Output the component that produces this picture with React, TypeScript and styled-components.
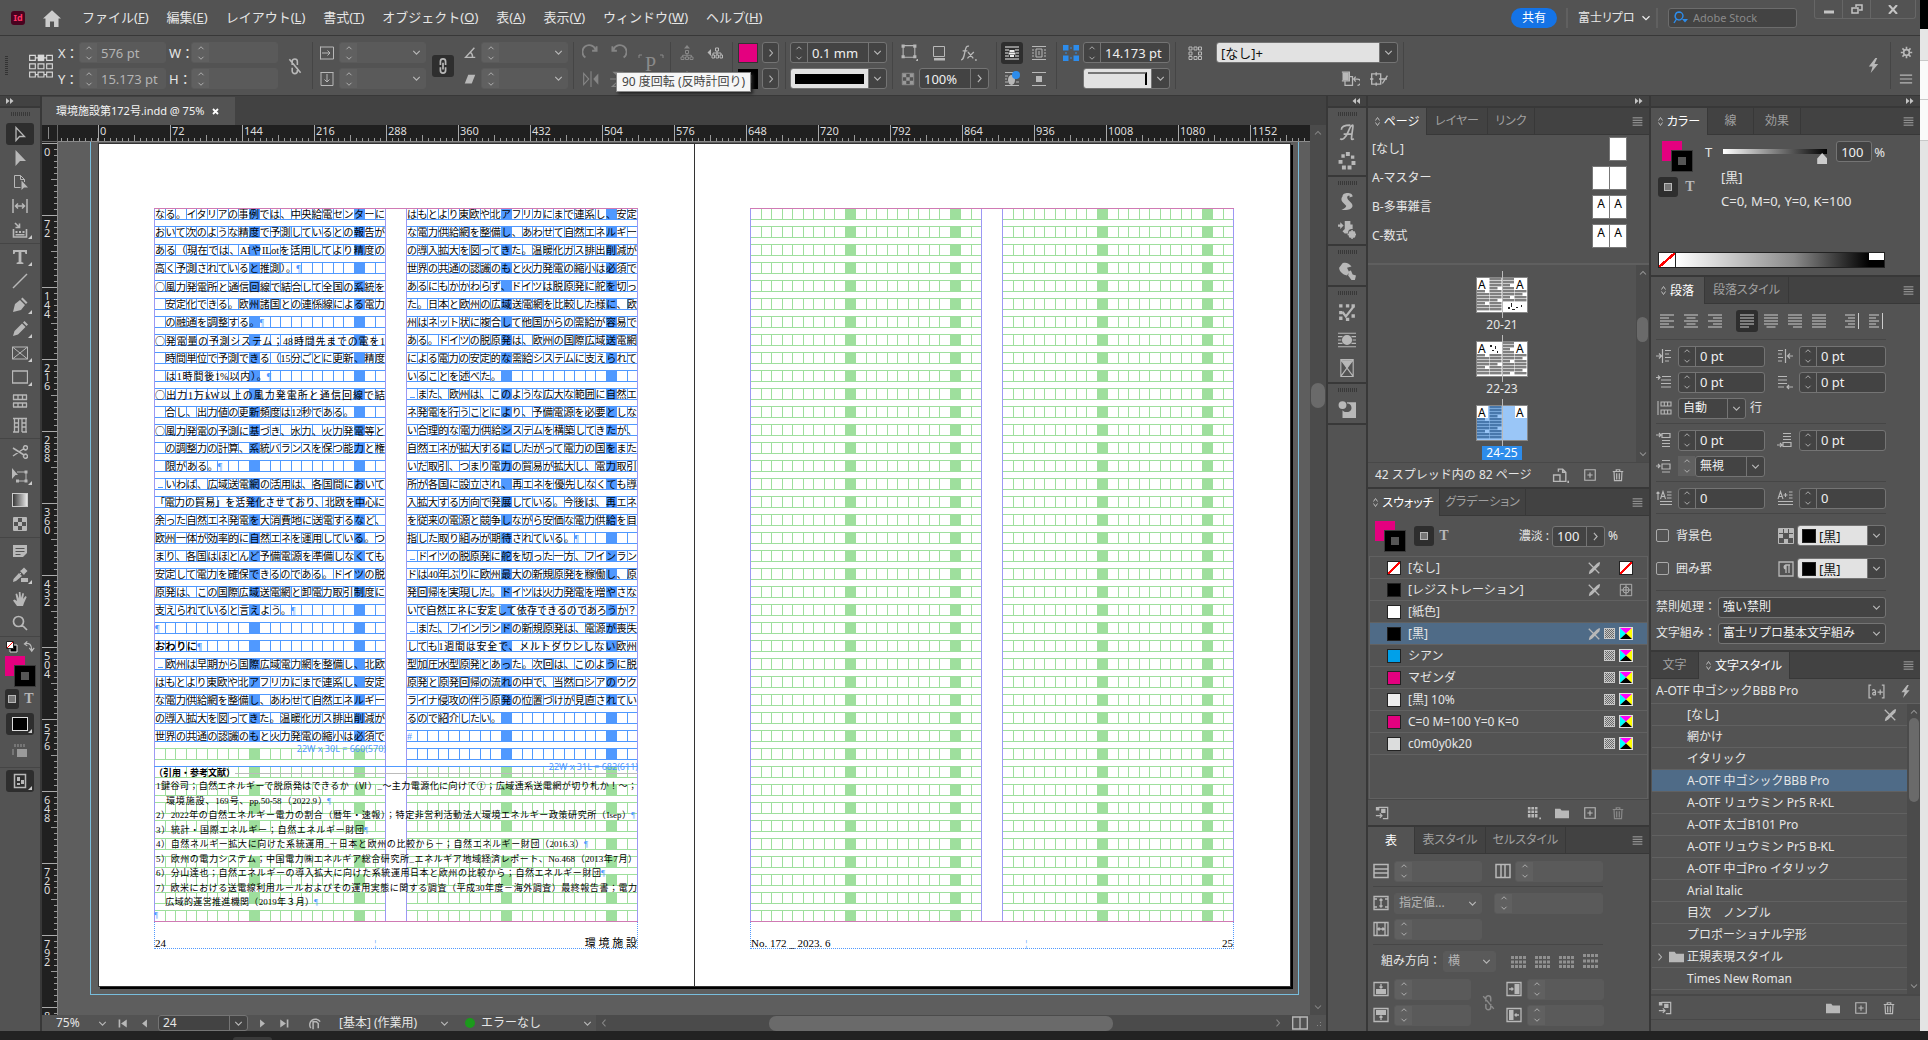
import React from "react";
import styled, { createGlobalStyle, css } from "styled-components";

const c = {
  bar: "#535353",
  dark: "#424242",
  line: "#383838",
  field: "#434343",
  ghost: "#5a5a5a",
  edge: "#747474",
  text: "#e6e6e6",
  dim: "#a0a0a0",
  icon: "#b8b8b8",
  pick: "#4f6b87",
  magenta: "#e4007f",
  grid: "#5099ff",
  green: "#9edf9d",
};
const ui = `"Noto Sans", "Noto Sans CJK JP", sans-serif`;
const mincho = `"Liberation Serif", "Noto Sans CJK JP", serif`;

const Global = createGlobalStyle`
  *, *::before, *::after { box-sizing: border-box; }
  body { margin: 0; background: #222; color: ${c.text}; font: 12px/16px ${ui}; overflow: hidden; }
  button, input, select { font: inherit; color: inherit; margin: 0; padding: 0; border: 0; background: none; min-width: 0; }
  button { display: flex; align-items: center; justify-content: center; flex: none; }
  select { appearance: none; }
  ul { list-style: none; margin: 0; padding: 0; }
  svg { display: block; flex: none; }
`;

/* ---------- icons: s = stroked path, f = filled path ---------- */
type Shape = { s?: string; f?: string; w?: number };
const shapes: Record<string, Shape> = {
  chevD: { s: "M4 6l4 4 4-4", w: 1.4 },
  chevU: { s: "M4 10l4-4 4 4", w: 1.4 },
  chevR: { s: "M6 3.5l4 4.5-4 4.5", w: 1.4 },
  chevL: { s: "M10 3.5L6 8l4 4.5", w: 1.4 },
  home: { f: "M8 1L0 8.5h2.2V16h4v-5h3.6v5h4V8.500H16z" },
  ref: { s: "M1 1.500h3.500v3H1zM11.500 1.500H15v3h-3.500zM1 6.700h3.500v3H1zM6.200 6.700h3.600v3H6.200zM11.500 6.700H15v3h-3.500zM1 11.800h3.500v3H1zM6.200 11.800h3.600v3H6.200zM11.500 11.800H15v3h-3.500zM4.500 3h2M9.500 3h2M4.500 13.300h2M9.500 13.300h2", f: "M6 1h4v4H6z", w: 0.7 },
  unlink: { s: "M5.500 7V4a2.300 2.300 0 014.600 0v3M5.500 9.500v3a2.300 2.300 0 004.600 0v-3M3 2l10 12", w: 1.4 },
  link: { s: "M5.700 7V4a2.300 2.300 0 014.600 0v3M5.700 9v3a2.300 2.300 0 004.600 0V9M8 5v6", w: 1.5 },
  scaleX: { s: "M1.500 1.500v13M1.500 2h13M1.500 14h13M3 8h8M8.500 5.500L11 8l-2.500 2.500M14.500 2v12" },
  scaleY: { s: "M1.500 1.500h13M2 1.500v13M14 1.500v13M8 3v8M5.500 8.500L8 11l2.500-2.500M2 14.500h12" },
  angle: { s: "M13 2L3 13h11M8 7c2 1 3 3 3 6", w: 1.6 },
  shear: { f: "M6 3h8l-4 10H2z" },
  rotR: { s: "M3 12a6 6 0 119-7M13 2v4H9", w: 1.6 },
  rotL: { s: "M13 12a6 6 0 10-9-7M3 2v4h4", w: 1.6 },
  flipH: { s: "M1.500 3v10l4.500-5zM8 1v14", f: "M14.500 3v10L10 8z" },
  flipV: { s: "M3 14.500h10L8 10zM1 8h14", f: "M3 1.500h10L8 6z" },
  tree: { s: "M6.500 5.500h3v3h-3zM2 12h3v2.500H2zM6.500 12h3v2.500h-3zM11 12h3v2.500h-3zM8 8.500V12M3.500 12v-1.700h9V12", f: "M8 0l3 3.500H5z" },
  treeL: { s: "M8.500 3h3v3h-3zM5 10h2.500v3H5zM9 10h2.500v3H9zM13 10h2.500v3H13zM10 6v4M6 10V8h8v2", f: "M4 4v7L0.500 7.500z" },
  corner: { s: "M3 1.500h9a1 1 0 011 1v9a1 1 0 01-1 1H3a1 1 0 01-1-1v-9a1 1 0 011-1", f: "M0.500 0.500h3v3h-3zM11.500 0.500h3v3h-3zM0.500 10.500h3v3h-3zM11.500 10.500h3v3h-3zM15 14h1v2h-2z" },
  shadow: { s: "M2.500 1.500h11v10h-11z", f: "M3 13h11v2.500H3z" },
  fx: { s: "M1 15c2 0 2.500-2 3.500-7S6 1.500 8.500 2M2.500 6.500H7M7.500 7.500l5 6M13 7.500l-6 6M15 14v2", w: 1.2 },
  checker: { s: "M1.500 1.500h13v13h-13z", f: "M2 2h4v4H2zM10 2h4v4h-4zM6 6h4v4H6zM2 10h4v4H2zM10 10h4v4h-4z" },
  wrapA: { s: "M1 2h14M1 5h4M11 5h4M1 8h3M12 8h3M1 11h4M11 11h4M1 14h14", f: "M5.500 5h5v2h-5zM4.500 7.500h7v2h-7zM6 10h4v2H6z" },
  wrapB: { s: "M1 1.500h14M1 5h2M13 5h2M1 8h2M13 8h2M1 11h2M13 11h2M1 14.500h14M5 4h6v8H5zM8 6v4" },
  wrapC: { s: "M1 1.500h14M1 14.500h14M1 5h3M1 8h2M1 11h3M12 11h3" },
  wrapD: { s: "M1 1.500h14M1 14.500h14", f: "M5 5h6v6H5z" },
  bluebox: { f: "M0 0h5.500v5.500H0zM10.500 0H16v5.500h-5.500zM0 10.500h5.500V16H0zM10.500 10.500H16V16h-5.500z", s: "M7 3h2M7 13h2M3 7v2M13 7v2" },
  marquee: { s: "M2 2h3v3H2zM7 2h3v3H7zM11.500 2h3v3h-3zM2 7h3v3H2zM11.500 7h3v3h-3zM2 11.500h3v3H2zM7 11.500h3v3H7zM11.500 11.500h3v3h-3z" },
  clear: { s: "M1.500 2.500h6v7h-6M7 6h3v7H4v-3M14 13a2.500 2.500 0 000-5h-3M12.500 6L11 8l1.500 2", f: "M2 3h5v6H2z" },
  cancel: { s: "M1.500 3.500h8v9h-8zM5.500 2v3M5.500 11v3M0 8h3M8 8h3M11 12l4.500-7M11 8h4", w: 1.2 },
  bolt: { f: "M10 0L3 9h4l-2 7 8-9.500H9L12 0z" },
  gear: { s: "M8 4.500a3.500 3.500 0 100 7 3.500 3.500 0 000-7M8 1v2.500M8 12.500V15M1 8h2.500M12.500 8H15M3 3l1.800 1.800M11.200 11.200L13 13M13 3l-1.800 1.800M4.800 11.200L3 13", w: 2 },
  menu: { s: "M1 3.500h14M1 8h14M1 12.500h14", w: 1.3 },
  lines: { s: "M2 3.500h12M2 6.500h12M2 9.500h12M2 12.500h12" },
  search: { s: "M6 2a4 4 0 014 4 4 4 0 01-6.500 3L1 13M6 2a4 4 0 00-2.500 7", f: "M9 9h6l-3 3.500z", w: 1.4 },
  arrow: { s: "M4 1.500v13l3.500-4h5z", w: 1.3 },
  arrowF: { f: "M3.500 0v16l4.500-5H14z" },
  page: { s: "M2.500 1.500h6l4 4V8M2.500 1.500v12h6M8.500 1.500v4h4", f: "M9.500 6.500V16l2.500-2.500h4z" },
  gap: { s: "M1 1v14M15 1v14M3.500 8h9M6 5.500L3.500 8 6 10.500M10 5.500L12.500 8 10 10.500", w: 1.5 },
  collect: { s: "M1.500 7v8h13V7M3 1l4 4M7.500 1.500V5.500H3.500", f: "M3.500 9h2v2h-2zM7 9h2v2H7zM10.500 9h2v2h-2zM3.500 12h9v1.500h-9z", w: 1.6 },
  type: { f: "M1 1h14v4h-1.500l-.8-2H9.400v10l2 .7V15H4.600v-1.300l2-.7V3H3.300l-.8 2H1z" },
  slash: { s: "M1 15L15 1", w: 1.5 },
  pen: { f: "M1 15l2-8 5-4 5 5-4 5zM9 2l1.500-1.500L15.500 5.500 14 7z" },
  pencil: { f: "M1 15l1.500-5L10 2.500 13.500 6 6 13.500zM11 1.500L12.500 0 16 3.500 14.500 5z" },
  frame: { s: "M.500 2h15v12H.500zM.500 2l15 12M15.500 2L.500 14" },
  rect: { s: "M.500 2h15v12H.500z", w: 1.3 },
  tblH: { s: "M1 2h14M1 6.500h14M1 10h14M1 14h14M1.500 2v5M14.500 2v5M6 2v5M10.500 2v5M1.500 10v4M6 10v4M10.500 10v4M14.500 10v4", w: 1.3 },
  tblV: { s: "M1 1.500h14M2.500 2v13M6.500 2v13M10 2v13M14 2v13M3 6h3M3 10h3M10 6h4M10 10h4M1 15h6M10 15h5", w: 1.3 },
  scissors: { s: "M1 4l11 7M1 12L12 4.500M12.500 5.500a2 2 0 102-3.500 2 2 0 00-2 3.500M12.500 10.500a2 2 0 102 3.500 2 2 0 00-2-3.500", w: 1.5 },
  xform: { s: "M5 4h9v9H5", f: "M0 0l6 7H3.500L0 11zM12.500 2.500h3v3h-3zM12.500 11.500h3v3h-3zM4 11.500h3v3H4z" },
  note: { f: "M1 2h14v8l-4 4H1zM3.500 5v1h9V5zM3.500 8v1h9V8zM3.500 11v1h5v-1z" },
  dropper: { s: "M2 13l7-7", f: "M1 15l.5-3L7 6l3 3-6 5zM8 4l1.500-1L12 .500 15.500 4 13 6.500 12 8zM9 11h7v4H9z" },
  hand: { f: "M5 15L1 9.500 2.500 8.500 5 10 3.500 3l1.500-.5 2 5L6.800 1h1.700L9 7l1.500-5 1.500.5L11 8l2.500-3 1.200 1L12 12l-1 3z" },
  zoom: { s: "M6.500 1.500a5 5 0 110 10 5 5 0 010-10M10 10l5 5", w: 1.7 },
  swap: { s: "M4 3c5-1 8 2 8 8M6.500 .500L3 3.500l3.500 2.500M9 8.500l3 4 3-4", w: 1.5 },
  tick: { s: "M3 1v3M6 1v3M9 1v3M12 1v3M1 6v6", f: "M5 6h10v8H5z" },
  view: { s: "M2.500 1.500h11v13h-11z", f: "M5 4h3v4H5zM9 7h3v4H9zM5 10h3v2H5z", w: 1.5 },
  script: { s: "M2 13c2 2 5-1 7-6s3-6 4-6-1 8-1 12c0 1 1 1 2 0M5 9h8M3 5c0-3 4-4 8-4", w: 1.5 },
  dots: { f: "M7 0h3.500v3.500H7zM11.500 3h3v3h-3zM12 8h3.500v3.500H12zM8.500 12h3.500v3.500H8.500zM3.500 12h3.500v3.500H3.500zM.500 7h3.500v3.500H.500zM3 2h3v3H3z" },
  snake: { f: "M4 3c0-4 9-4 9 0l-3 1 .5-1.500C8 2 7.500 4 9 6l3 3c3 4-2 7-9 6 3-1 5-3 4-4L4 8C2.500 6.500 3 4 4 3z" },
  import: { f: "M0 3h2V1l3 3-3 3V5H0zM6 0h5v3h2v4c-3 0-4 1-4 4H6L4 9l2-2z", s: "M12.500 9.500a2.500 2.500 0 100 5 2.500 2.500 0 000-5M12.500 8v8M8.500 12h8M10 9.500l5 5M15 9.500l-5 5", w: 1.3 },
  link2: { f: "M4 1c3-1 6 0 8 3L8 5l2 4-2 3C4 11 1 8 1 5zM10 8l1.500-.5L13 11l3 1-1 4h-3l-3-4z" },
  check: { f: "M1 1h3v3H1zM7 1h3v3H7zM12 1h3v3h-3zM1 7h3v3H1zM12 10h3v3h-3zM1 12h3v3H1zM7 13h3v3H7z", s: "M4 8l3 4 7-9", w: 2 },
  over: { s: "M0 2h16M0 5h4M12 5h4M0 8h3M13 8h3M0 11h4M12 11h4M0 14h16", f: "M8 3.500a4.500 4.500 0 100 9 4.500 4.500 0 000-9z" },
  glass: { s: "M2.500 .500h11v15h-11zM2.500 .500L13.500 15.500M13.500 .500L2.500 15.500", f: "M3 1h10L8 8z" },
  puzzle: { f: "M8 2h8v14H4V9c2 3 8 2 8-2 0-2-1-4-4-4zM4 1a3.500 3.500 0 100 7 3.500 3.500 0 000-7z" },
  nopen: { s: "M2 2l12 12M3 14l5-5", f: "M2 15l1-4 8-8 3-2 1 1-1 3-8 8z", w: 1.5 },
  target: { s: "M1.500 1.500h13v13h-13zM8 4.500a3.500 3.500 0 100 7 3.500 3.500 0 000-7M8 2v12M2 8h12" },
  plus: { s: "M2 2h12v12H2zM8 5v6M5 8h6", w: 1.3 },
  trash: { s: "M2 4h12M6 4V2h4v2M3.500 4.500l.5 10h8l.5-10M6.500 6v7M9.500 6v7", w: 1.4 },
  folder: { f: "M0 3h6l1.500 2H16v9H0z" },
  lib: { s: "M4 1.500h10.500v13H9M1 11h7M5.500 8.500L8 11l-2.500 2.500", f: "M1 1h4v4H1zM7 3h5v5H7z", w: 1.4 },
  tiles: { f: "M1 1h3v3H1zM5 1h3v3H5zM9 1h3v3H9zM1 5h3v3H1zM5 5h3v3H5zM9 5h3v3H9zM1 9h3v4H1zM5 9h3v4H5zM9 9h3v4H9zM14 13h2v2h-2z" },
  pages: { s: "M1.500 7.500h6v6h-6zM6 4.500V2h4l3 3v8.500H8M10 2v3h3", f: "M14.500 13h1.500v2h-1.500z", w: 1.3 },
  split: { s: "M.700 2h14.600v12H.700zM8 2v12", w: 1.3 },
  first: { f: "M2 3h2v10H2zM12 3v10L5 8z" },
  prev: { f: "M11 3v10L5 8z" },
  next: { f: "M5 3v10l6-5z" },
  last: { f: "M12 3h2v10h-2zM4 3v10l7-5z" },
  pre: { s: "M4 13A6 6 0 1114 6M6.500 14V6H10l2 2v5", w: 1.6 },
  indL: { s: "M6.500 1v14M9 2.500h6M9 6h4M9 9.500h6M9 13h4M0 8h5M3 5.500L5.500 8 3 10.500", w: 1.2 },
  indR: { s: "M8.500 1v14M1 2.500h5M1 6h4M1 9.500h5M1 13h4M10.500 8H16M13 5.500L10.500 8l2.500 2.500", w: 1.2 },
  indF: { s: "M0 3.500h4M2 1.500l2 2-2 2M6 2.500h9M5 6h10M5 9.500h10M5 13h10", w: 1.2 },
  indE: { s: "M1 2.500h9M1 6h9M1 9.500h9M1 13h6M10 13h6M12 11l-2 2 2 2", w: 1.2 },
  rows: { s: "M2 1v14M5 2h10v4H5zM5 10h10v4H5zM8.300 2v4M11.600 2v4M8.300 10v4M11.600 10v4", w: 1.1 },
  before: { s: "M0 3h5M3 1l2 2-2 2M6 1.500h8v4H6zM6 8.500h8M6 11.500h8M6 14.500h8", w: 1.2 },
  after: { s: "M0 13h5M3 11l2 2-2 2M6 10.500h8v4H6zM6 1.500h8M6 4.500h8M6 7.500h8", w: 1.2 },
  mid: { s: "M0 8h4M2 6l2 2-2 2M6 6h8v5H6zM6 2.500h8M6 14h8", w: 1.2 },
  drop: { s: "M2 2v8M.500 3.500L2 2l1.500 1.500M4.500 9L7 1.500 9.500 9M5.500 6.500h3M11 2h4.500M11 5h4.500M11 8h4.500M4 11.500h12M4 14.500h12", w: 1.1 },
  dropN: { s: "M1 9L3.500 1.500 6 9M2 6.500h3M6.500 5h4M8.500 3v4M12 2h3.500M12 5h3.500M12 8h3.500M1 11.500h15M1 14.500h15", w: 1.1 },
  cells: { s: "M1 1.500h14v13H1zM1 6h14M1 10h14", w: 1.5 },
  cols: { s: "M1 1.500h14v13H1zM6 1.500v13M10 1.500v13", w: 1.5 },
  rowH: { s: "M1 1.500h14v13H1zM8 4v8M6.500 5.500L8 4l1.500 1.500M6.500 10.500L8 12l1.500-1.500M1 4h3M12 4h3M1 12h3M12 12h3", w: 1.3 },
  colW: { s: "M1 1.500h14v13H1zM4 1.500v13M12 1.500v13M5 8h6M6.500 6.500L5 8l1.500 1.500M9.500 6.500L11 8 9.500 9.500", w: 1.3 },
  insT: { s: "M1 1.500h14v13H1zM8 3v4M6.500 5.500L8 7l1.500-1.500", f: "M3 8h10v5H3z", w: 1.3 },
  insB: { s: "M1 1.500h14v13H1zM8 13V9M6.500 10.500L8 9l1.500 1.500", f: "M3 3h10v5H3z", w: 1.3 },
  insL: { s: "M1 1.500h14v13H1zM3 8h4M5.500 6.500L7 8 5.500 9.500", f: "M8.500 3h5v10h-5z", w: 1.3 },
  insR: { s: "M1 1.500h14v13H1zM13 8H9M10.500 6.500L9 8l1.500 1.500", f: "M3 3h4.500v10H3z", w: 1.3 },
  mini: { f: "M1 3h3v3H1zM5 3h3v3H5zM9 3h3v3H9zM13 3h3v3h-3zM1 7.500h3v3H1zM5 7.500h3v3H5zM9 7.500h3v3H9zM13 7.500h3v3h-3zM1 12h3v3H1zM5 12h3v3H5zM9 12h3v3H9zM13 12h3v3h-3z" },
  mini2: { f: "M1 1h3v3H1zM5 1h3v3H5zM9 1h3v3H9zM13 1h3v3h-3zM1 6.500h3v3H1zM5 6.500h3v3H5zM9 6.500h3v3H9zM13 6.500h3v3h-3zM1 12h3v3H1zM5 12h3v3H5zM9 12h3v3H9zM13 12h3v3h-3z" },
  shade: { f: "M1 1h4v4H1zM6 1h4v4H6zM11 1h4v4h-4zM1 6h4v4H1zM6 11h4v4H6zM11 6h4v4h-4z", s: "M.500 .500h15v15H.500z" },
  pilcrow: { s: "M1 1h14v14H1zM8 4v8M11 4v8M12 4H7.500", f: "M8 3.500a2.500 2.500 0 100 5z", w: 1.3 },
  aplus: { s: "M3 2H1v12h2M13 2h2v12h-2M4 7c1-1 3-1 3 1v3c-3 1-4-2 0-2.500M9 8.500h5M11.500 6v5", w: 1.2 },
};
const alignIcon = (k: number) => {
  const out: string[] = [];
  for (let i = 0; i < 5; i++) {
    const y = 2 + i * 3;
    const isShort = k < 3 ? i % 2 === 1 : k < 6 ? i === 4 : k > 6 ? i % 2 === 1 : false;
    const full = k > 6 ? 10 : 14;
    const len = isShort ? (k > 6 ? 7 : 9) : full;
    const mode = k % 3;
    const x = k === 6 || k === 8 ? 1 : k === 7 ? 1 + full - len : mode === 0 ? 1 : mode === 1 ? 1 + (full - len) / 2 : 1 + full - len;
    out.push(`M${x} ${y}h${len}`);
  }
  if (k > 6) out.push("M14.500 0v16");
  return out.join("");
};
function Glyph({ n, size = 16, color = c.icon, d }: { n?: string; size?: number; color?: string; d?: string }) {
  const g: Shape = d ? { s: d } : shapes[n || "rect"];
  return (
    <svg width={size} height={size} viewBox="0 0 16 16" aria-hidden="true">
      {g.f && <path d={g.f} fill={color} />}
      {g.s && <path d={g.s} fill="none" stroke={color} strokeWidth={g.w || 1} />}
    </svg>
  );
}

/* ---------- shell ---------- */
const Shell = styled.div`display: flex; flex-direction: column; height: 100vh;`;
const Upper = styled.div`flex: 1; display: flex; min-height: 0;`;
const AppWindow = styled.main`flex: 1; min-width: 0; display: flex; flex-direction: column; background: ${c.line};`;
const Behind = styled.div`
  width: 8px; background: linear-gradient(#000 0 29px, #e6e6e6 29px 60px, #c8c8c8 60px 61px, #fafafa 61px 99px, #c8c8c8 99px 100px, #fafafa 100px 140px, #c8c8c8 140px 141px, #e4e4e4 141px);
`;
const Taskbar = styled.div`height: 9px; background: #222; padding: 6px 0 0 233px;`;
const TaskTab = styled.div`width: 39px; height: 3px; background: #3a3a3a; border-radius: 3px 3px 0 0;`;

const MenuBar = styled.header`
  height: 36px; flex: none; background: ${c.bar}; border-bottom: 1px solid ${c.line};
  display: flex; align-items: center; padding-left: 11px; font-size: 13px;
`;
const Logo = styled.div`
  width: 14px; height: 14px; border-radius: 3px; background: #49021f; color: #ff3366; font-weight: 700; font-size: 9px; line-height: 13px; text-align: center; margin-right: 18px;
`;
const MenuNav = styled.nav`display: flex; gap: 18px; margin-left: 21px; margin-top: -2px; flex: 1;`;
const Share = styled.button`width: 46px; height: 20px; border-radius: 10px; background: #1473e6; color: #fff; font-size: 12px;`;
const BarRule = styled.i`width: 2px; height: 20px; background: #606060; margin: 0 10px 0 9px;`;
const Account = styled.button`font-size: 12px; gap: 4px; height: 20px; width: 71px; justify-content: flex-start; font-feature-settings: "palt"; white-space: nowrap;`;
const Search = styled.label`
  width: 129px; height: 20px; border: 1px solid #6c6c6c; border-radius: 3px; background: ${c.field}; display: flex; align-items: center; gap: 4px; padding-left: 4px; margin-right: 17px;
  input { flex: 1; font-size: 11px; &::placeholder { color: #8a8a8a; opacity: 1; } }
`;
const WinKeys = styled.div`
  align-self: flex-start; display: flex; height: 19px; border: 1px solid #666; border-top: 0; border-radius: 0 0 3px 3px; margin-right: 4px;
  button { width: 28px; border-right: 1px solid #666; }
  button:last-child { width: 44px; border: 0; }
`;

/* ---------- form parts ---------- */
const Box = styled.div<{ $ghost?: boolean; $w?: number }>`
  height: 21px; display: flex; border-radius: 3px; overflow: hidden; border: 1px solid ${(p) => (p.$ghost ? c.ghost : c.edge)};
  background: ${(p) => (p.$ghost ? c.ghost : c.field)}; ${(p) => (p.$w ? `width: ${p.$w}px; flex: none;` : "")}
  color: ${(p) => (p.$ghost ? "#b4b4b4" : "#f0f0f0")}; font-size: 13px;
  input, select { flex: 1; width: 100%; padding-left: 4px; }
  select { font-size: 12px; }
`;
const Spin = styled.button<{ $ghost?: boolean }>`
  width: 17px; flex-direction: column; ${(p) => (p.$ghost ? "background: #606060;" : `border-right: 1px solid ${c.edge};`)}
`;
const Drop = styled.button<{ $ghost?: boolean }>`width: 18px; ${(p) => (p.$ghost ? "" : `border-left: 1px solid ${c.edge};`)}`;
const Paper = styled.span`flex: 1; background: #e2e2e2; color: #111; display: flex; align-items: center; padding: 3px 4px; gap: 3px; white-space: nowrap;`;
const Stroke = styled.i`flex: 1; height: 10px; background: #000;`;
const Corner = styled.i`flex: 1; align-self: stretch; border-top: 2px solid #777; border-right: 2px solid #000;`;

function Field({ label, value = "", ghost, spin, drop, side, w }: { label: string; value?: string; ghost?: boolean; spin?: boolean; drop?: boolean; side?: boolean; w?: number }) {
  return (
    <Box $ghost={ghost} $w={w}>
      {spin && <Spin $ghost={ghost} aria-label={label + " step"}><Glyph n="chevU" size={10} /><Glyph n="chevD" size={10} /></Spin>}
      <input aria-label={label} defaultValue={value} />
      {(drop || side) && <Drop $ghost={ghost} aria-label={label + " list"}><Glyph n={side ? "chevR" : "chevD"} size={13} /></Drop>}
    </Box>
  );
}
function Pick({ label, value, ghost, line = true, w }: { label: string; value: string; ghost?: boolean; line?: boolean; w?: number }) {
  return (
    <Box $ghost={ghost} $w={w}>
      <select aria-label={label}><option>{value}</option></select>
      <Drop $ghost={ghost || !line} aria-label={label + " list"}><Glyph n="chevD" size={13} /></Drop>
    </Box>
  );
}

/* ---------- control bar ---------- */
const Control = styled.section`
  height: 60px; flex: none; background: ${c.bar}; border-bottom: 1px solid ${c.line}; display: flex; align-items: center; position: relative; z-index: 2;
`;
const Grip = styled.i<{ $v?: boolean }>`
  ${(p) => p.$v
    ? css`width: 3px; height: 19px; background: repeating-linear-gradient(#333 0 1px, transparent 1px 2px); margin: 0 20px 0 5px;`
    : css`width: 19px; height: 4px; background: repeating-linear-gradient(90deg, #383838 0 1px, transparent 1px 2px); flex: none; margin: 4px auto 3px;`}
`;
const Pair = styled.div<{ $cols: string; $gap?: number; $ml?: number }>`
  display: grid; grid-template-columns: ${(p) => p.$cols}; grid-auto-rows: 21px; gap: 5px ${(p) => p.$gap ?? 3}px; margin-left: ${(p) => p.$ml ?? 0}px;
  align-items: center; font-size: 13px;
`;
const Rule = styled.i<{ $ml?: number }>`width: 1px; height: 47px; background: #454545; margin-left: ${(p) => p.$ml ?? 5}px;`;
const Press = styled.button<{ $on?: boolean; $ml?: number; $w?: number; $faint?: boolean }>`
  width: ${(p) => p.$w ?? 22}px; height: 22px; border-radius: 3px; margin-left: ${(p) => p.$ml ?? 0}px;
  ${(p) => p.$on && "background: #2e2e2e;"} ${(p) => p.$faint && "opacity: .5;"}
`;
const Chip = styled.i<{ $c: string; $hole?: boolean }>`
  width: 20px; height: 20px; background: ${(p) => p.$c}; border: ${(p) => (p.$hole ? "6px solid #000" : "1px solid #333")};
`;
const MoreBtn = styled.button`width: 17px; height: 21px; border: 1px solid ${c.edge}; border-radius: 3px; background: ${c.field};`;
const Line = styled.div<{ $gap?: number; $end?: boolean }>`display: flex; align-items: center; gap: ${(p) => p.$gap ?? 4}px; ${(p) => p.$end && "justify-content: flex-end;"}`;
const Fill = styled.i`flex: 1;`;
const Anchor = styled.div`position: relative; margin-left: 11px;`;
const Tip = styled.div`
  position: absolute; left: -22px; top: 19px; white-space: nowrap; background: #f6f6f6; color: #444; border: 1px solid #888; box-shadow: 2px 2px 3px #222; padding: 0 5px; line-height: 18px; font-size: 12px;
`;

function ControlBar() {
  return (
    <Control>
      <Grip $v />
      <Glyph n="ref" size={26} color="#d8d8d8" />
      <Pair $cols="18px 87px 19px 87px" $ml={4}>
        <span>X：</span><Field label="X" value="576 pt" ghost spin /><span>W：</span><Field label="W" ghost spin />
        <span>Y：</span><Field label="Y" value="15.173 pt" ghost spin /><span>H：</span><Field label="H" ghost spin />
      </Pair>
      <Press $ml={6} aria-label="縦横比を固定"><Glyph n="unlink" size={18} /></Press>
      <Rule $ml={6} />
      <Pair $cols="16px 87px" $gap={4} $ml={6}>
        <Glyph n="scaleX" /><Field label="拡大/縮小 X" ghost spin drop />
        <Glyph n="scaleY" /><Field label="拡大/縮小 Y" ghost spin drop />
      </Pair>
      <Press $on $ml={6} aria-label="リンク"><Glyph n="link" size={18} /></Press>
      <Pair $cols="14px 87px" $gap={4} $ml={9}>
        <Glyph n="angle" size={14} /><Field label="回転角度" ghost spin drop />
        <Glyph n="shear" size={14} /><Field label="せん断" ghost spin drop />
      </Pair>
      <Rule />
      <Pair $cols="18px 18px" $gap={9} $ml={8}>
        <Press $w={18} $faint aria-label="右回転"><Glyph n="rotR" size={18} /></Press>
        <Press $w={18} $faint aria-label="左回転"><Glyph n="rotL" size={18} /></Press>
        <Press $w={18} $faint aria-label="水平反転"><Glyph n="flipH" size={18} /></Press>
        <Press $w={18} $faint aria-label="垂直反転"><Glyph n="flipV" size={18} /></Press>
      </Pair>
      <Anchor>
        <svg width="26" height="26" viewBox="0 0 26 26">
          <path d="M1 5V2h3M22 2h3v3" fill="none" stroke="#8a8a8a" />
          <text x="7" y="18" fontFamily="Liberation Serif" fontSize="20" fill="#8a8a8a">P</text>
        </svg>
        <Tip role="tooltip">90 度回転 (反時計回り)</Tip>
      </Anchor>
      <Rule $ml={6} />
      <Pair $cols="18px 18px" $gap={10} $ml={8}>
        <Glyph n="tree" color="#888" /><Glyph n="treeL" /><Glyph n="tree" color="#888" /><i />
      </Pair>
      <Rule $ml={7} />
      <Pair $cols="20px 17px" $gap={4} $ml={5}>
        <Chip $c={c.magenta} /><MoreBtn aria-label="塗り"><Glyph n="chevR" size={12} /></MoreBtn>
        <Chip $c="#555" $hole /><MoreBtn aria-label="線"><Glyph n="chevR" size={12} /></MoreBtn>
      </Pair>
      <Rule $ml={6} />
      <Pair $cols="97px" $ml={4}>
        <Field label="線幅" value="0.1 mm" spin drop />
        <Box><Paper><Stroke /></Paper><Drop aria-label="線種"><Glyph n="chevD" size={13} /></Drop></Box>
      </Pair>
      <Rule />
      <Pair $cols="88px" $ml={8}>
        <Line $gap={13}><Glyph n="corner" size={17} /><Glyph n="shadow" /><Glyph n="fx" size={17} /></Line>
        <Line $gap={4}><Glyph n="checker" size={14} color="#999" /><Field label="不透明度" value="100%" side w={70} /></Line>
      </Pair>
      <Rule $ml={7} />
      <Pair $cols="22px 22px" $gap={5} $ml={4}>
        <Press $on aria-label="回り込みなし"><Glyph n="wrapA" color="#eee" /></Press><Press aria-label="境界線ボックス"><Glyph n="wrapB" /></Press>
        <Press aria-label="オブジェクトのシェイプ">
          <svg width="16" height="16" viewBox="0 0 16 16"><path d={shapes.wrapC.s} stroke={c.icon} fill="none" /><ellipse cx="7.500" cy="9" rx="3.500" ry="5" fill={c.icon} /><circle cx="12" cy="4" r="4" fill="#2d8ceb" /></svg>
        </Press>
        <Press aria-label="ジャンプ"><Glyph n="wrapD" /></Press>
      </Pair>
      <Rule $ml={6} />
      <Pair $cols="17px 87px" $ml={6}>
        <Glyph n="bluebox" color="#2d8ceb" /><Field label="オフセット" value="14.173 pt" spin />
        <i /><Box><Paper><Corner /></Paper><Drop aria-label="コーナー"><Glyph n="chevD" size={13} /></Drop></Box>
      </Pair>
      <Rule />
      <Pair $cols="18px 182px" $gap={11} $ml={11}>
        <Glyph n="marquee" />
        <Box><Paper>[なし]+</Paper><Drop aria-label="オブジェクトスタイル"><Glyph n="chevD" size={13} /></Drop></Box>
        <i /><Line $gap={10} $end><Glyph n="clear" size={20} /><Glyph n="cancel" size={18} /><i /></Line>
      </Pair>
      <Rule />
      <Fill />
      <Press aria-label="クイック適用"><Glyph n="bolt" size={15} /></Press>
      <Rule $ml={6} />
      <Pair $cols="22px" $ml={4}>
        <Press aria-label="設定"><Glyph n="gear" size={13} /></Press><Press aria-label="メニュー"><Glyph n="menu" size={14} /></Press>
      </Pair>
      <i style={{ width: 3 }} />
    </Control>
  );
}

/* ---------- tool box ---------- */
const Work = styled.div`flex: 1; min-height: 0; display: flex; gap: 2px;`;
const Dock = styled.aside<{ $w: number }>`width: ${(p) => p.$w}px; flex: none; display: flex; flex-direction: column; gap: 2px; overflow: hidden;`;
const DockHead = styled.div<{ $left?: boolean }>`
  height: 10px; flex: none; background: ${c.dark}; padding: 0 6px; display: flex; align-items: center; justify-content: ${(p) => (p.$left ? "flex-start" : "flex-end")};
`;
const Chevs = ({ back }: { back?: boolean }) => (
  <svg width="8" height="6" viewBox="0 0 8 6"><path d={back ? "M4 0v6L.500 3zM8 0v6L4.500 3z" : "M0 0v6l3.500-3zM4 0v6l3.500-3z"} fill="#c4c4c4" /></svg>
);
const ToolCol = styled.div`flex: 1; background: ${c.bar}; display: flex; flex-direction: column; align-items: center;`;
const Tool = styled.button<{ $on?: boolean }>`
  position: relative; width: 28px; height: 22px; margin: 1px 0; border-radius: 3px; ${(p) => p.$on && "background: #2e2e2e;"}
`;
const More = styled.i`position: absolute; right: 2px; bottom: 2px; border: 2px solid; border-color: transparent #ccc #ccc transparent;`;
const ToolRule = styled.i`width: 100%; height: 1px; margin: 1px 0; background: #454545; flex: none;`;
const Pile = styled.div`position: relative; width: 30px; height: 30px; flex: none;`;
const PileChip = styled.i<{ $top?: boolean }>`
  position: absolute; width: 20px; height: 20px; ${(p) => (p.$top ? "right: 0; bottom: 0; border: 6px solid #000; background: #555; outline: 1px solid #3a3a3a;" : `left: 0; top: 0; background: ${c.magenta};`)}
`;
const SwatchPile = () => <Pile><PileChip /><PileChip $top /></Pile>;
const Target = styled.button<{ $on?: boolean; $w?: number }>`
  width: ${(p) => p.$w ?? 20}px; height: 20px; border-radius: 3px; color: ${c.icon}; font: 700 14px/16px "Liberation Serif", serif; ${(p) => p.$on && "background: #2e2e2e;"}
`;
const Square = styled.i`width: 8px; height: 8px; border: 1px solid ${c.icon}; background: #777;`;
const ToolRow = styled.div<{ $h: number }>`height: ${(p) => p.$h}px; display: flex; align-items: center; justify-content: center; gap: 4px; flex: none;`;
const BlackChip = styled.i`width: 16px; height: 14px; background: #000; border: 1px solid #ddd;`;

const toolGroups: [string, number][][] = [
  [["arrow", 0], ["arrowF", 0], ["page", 0], ["gap", 0], ["collect", 1]],
  [["type", 1], ["slash", 0], ["pen", 1], ["pencil", 1], ["frame", 1], ["rect", 1], ["tblH", 0], ["tblV", 0]],
  [["scissors", 0], ["xform", 1], ["gradient", 0], ["checker", 0]],
  [["note", 0], ["dropper", 1], ["hand", 0], ["zoom", 0]],
];
function ToolBox() {
  return (
    <Dock $w={40}>
      <DockHead $left><Chevs /></DockHead>
      <ToolCol>
        <Grip />
        <i style={{ height: 3 }} />
        {toolGroups.map((g, i) => (
          <React.Fragment key={i}>
            {g.map(([n, more]) => (
              <Tool key={n} $on={n === "arrow"} aria-label={n}>
                {n === "gradient" ? (
                  <svg width="16" height="16"><defs><linearGradient id="tg"><stop stopColor="#333" /><stop offset="1" stopColor="#eee" /></linearGradient></defs><rect x=".500" y="1.500" width="15" height="13" fill="url(#tg)" stroke="#ccc" /></svg>
                ) : <Glyph n={n} />}
                {more ? <More /> : null}
              </Tool>
            ))}
            <ToolRule />
          </React.Fragment>
        ))}
        <ToolRow $h={18}>
          <svg width="12" height="12"><path d="M4 4h7v7H4z" fill="#000" stroke="#ddd" /><path d="M.500.500h7v7h-7z" fill="#fff" stroke="#222" /><path d="M1 7l6-6" stroke="red" /></svg>
          <Glyph n="swap" size={13} />
        </ToolRow>
        <SwatchPile />
        <ToolRow $h={26}><Target $on $w={14} aria-label="オブジェクト"><Square /></Target><Target $w={12} aria-label="テキスト">T</Target></ToolRow>
        <Tool $on aria-label="カラーを適用"><BlackChip /><More /></Tool>
        <ToolRow $h={30}><Glyph n="tick" color="#9a9a9a" /></ToolRow>
        <ToolRule />
        <Tool $on aria-label="表示モード"><Glyph n="view" /><More /></Tool>
      </ToolCol>
    </Dock>
  );
}

/* ---------- document ---------- */
const Doc = styled.section`flex: 1; min-width: 0; display: grid; grid-template: 29px 17px minmax(0, 1fr) 16px / 16px minmax(0, 1fr) 16px; background: ${c.line};`;
const DocTabs = styled.div`grid-column: 1 / -1; background: ${c.dark}; display: flex;`;
const DocTab = styled.button`background: ${c.bar}; height: 28px; padding: 0 16px 0 14px; font-size: 11px; gap: 8px; color: #f4f4f4; margin-top: 1px;`;
const RulerCorner = styled.div`background: #202020 linear-gradient(#888, #888) 6px 2px / 1px 12px no-repeat; border: 0 solid #666; border-width: 0 1px 1px 0;`;
const HRuler = styled.div`background: #202020; border-bottom: 1px solid #8a8a8a; display: flex; overflow: hidden;`;
const HLead = styled.i`width: 40px; flex: none; background: repeating-linear-gradient(90deg, transparent 0 3px, #999 3px 4px, transparent 4px 6px) 0 100% / 100% 3px no-repeat;`;
const HSeg = styled.span`
  width: 72px; flex: none; border-left: 1px solid #aaa; padding-left: 1px; font-size: 11px; line-height: 12px; color: #ddd;
  background: repeating-linear-gradient(90deg, transparent 0 5px, #999 5px 6px) 0 100% / 72px 3px repeat-x, linear-gradient(#999, #999) 35px 100% / 1px 6px no-repeat;
`;
const VRuler = styled.div`background: #202020; border-right: 1px solid #8a8a8a; overflow: hidden; padding-top: 1px;`;
const VSeg = styled.div`
  height: 72px; border-top: 1px solid #aaa; padding: 3px 0 0 2px; font-size: 11px; line-height: 9px; color: #ddd;
  background: repeating-linear-gradient(transparent 0 5px, #999 5px 6px) 100% 0 / 3px 72px no-repeat, linear-gradient(#999, #999) 100% 35px / 6px 1px no-repeat;
  span { display: block; width: 7px; overflow-wrap: anywhere; }
`;
const Canvas = styled.div`background: #5e5e5e; overflow: hidden; padding-left: 32px;`;
const Bleed = styled.div`width: max-content; border: solid #78bddc; border-width: 0 1px 1px; padding: 2px 8px 8px;`;
const Spread = styled.div`display: flex; box-shadow: 0 0 0 1px #333, 2px 2px 0 1px #000;`;
const Sheet = styled.article<{ $right?: boolean }>`
  width: ${(p) => (p.$right ? 596 : 595)}px; height: 842px; background: #fff; color: #000; font: 10px/13px ${mincho};
  padding: 64px 56px 0 55px; ${(p) => p.$right && "border-left: 1px solid #333;"}
`;
const Frame = styled.div`
  position: relative; display: grid; grid-template-columns: 1fr 1fr; gap: 20px; background: #fff;
  &::after { content: ""; position: absolute; inset: 0; border: solid #d07ab4; border-width: 1px 0; pointer-events: none; }
`;
const Col = styled.div`display: flex; flex-direction: column; gap: 6px; border: solid #9c98f4; border-width: 0 1px;`;
const Row = styled.div<{ $c: string }>`
  position: relative; height: 12px; border: solid ${(p) => p.$c}; border-width: 1px 0; display: flex;
  & > i { flex: 1; border-right: 1px solid ${(p) => p.$c}; }
  & > i:nth-child(22) { border: 0; }
  & > i:nth-child(10), & > i:nth-child(20) { background: ${(p) => p.$c}; }
`;
const RowText = styled.div<{ $bold?: boolean }>`position: absolute; inset: -1px 0; display: flex; white-space: nowrap; ${(p) => p.$bold && "font-weight: 700;"}`;
const Justified = styled.span`text-align: justify; text-align-last: justify; flex: none;`;
const Mark = styled.span`color: ${c.grid};`;
const Blank = styled.span`background: linear-gradient(${c.grid}, ${c.grid}) 3px 80% / 5px 1px no-repeat;`;
const Bullet = styled.span`font-family: "Noto Sans CJK JP", sans-serif;`;

type L = [string, number?, string?];
const left: L[] = [
  ["なる。イタリアの事例では、中央給電センターに"], ["おいて次のような精度で予測しているとの報告が"], ["ある（現在では、AIやILotを活用してより精度の"], ["高く予測されていると推測）。", 13.5, "¶"],
  ["○風力発電所と通信回線で結合して全国の系統を"], ["　安定化できる。欧州諸国との連係線による電力"], ["　の融通を調整する。", 10, "¶"],
  ["○発電量の予測システム；48時間先までの電を1"], ["　時間単位で予測できる（15分ごとに更新、精度"], ["　は1時間後1%以内）。", 10.7, "¶"],
  ["○出力1万kW以上の風力発電所と通信回線で結"], ["　合し、出力値の更新頻度は12秒である。", 19], ["○風力発電の予測に基づき、水力、火力発電等と"], ["　の調整力の計算、系統バランスを保つ能力と権"], ["　限がある。", 6, "¶"],
  ["_いわば、広域送電網の活用は、各国間において"], ["「電力の貿易」を活発化させており、北欧を中心に"], ["余った自然エネ発電を大消費地に送電するなど、"], ["欧州一体が効率的に自然エネを運用している。つ"],
  ["まり、各国はほとんど予備電源を準備しなくても"], ["安定して電力を確保できるのである。ドイツの脱"], ["原発は、この国際広域送電網と卸電力取引制度に"], ["支えられていると言えよう。", 13, "¶"], ["", 0, "¶"], ["おわりに", 4, "¶"],
  ["_欧州は早期から国際広域電力網を整備し、北欧"], ["はもとより東欧や北アフリカにまで連系し、安定"], ["な電力供給網を整備し、あわせて自然エネルギー"], ["の導入拡大を図ってきた。温暖化ガス排出削減が"], ["世界の共通の認識のもと火力発電の縮小は必須で"],
];
const right: L[] = [
  ...left.slice(26), ["あるにもかかわらず、ドイツは脱原発に舵を切っ"], ["た。日本と欧州の広域送電網を比較した様に、欧"], ["州はネット状に複合して他国からの需給が容易で"], ["ある。ドイツの脱原発は、欧州の国際広域送電網"],
  ["による電力の安定的な需給システムに支えられて"], ["いることを述べた。", 9], ["_また、欧州は、このような広大な範囲に自然エ"], ["ネ発電を行うことにより、予備電源を必要としな"], ["い合理的な電力供給システムを構築してきたが、"],
  ["自然エネが拡大するにしたがって電力の国をまた"], ["いだ取引、つまり電力の貿易が拡大し、電力取引"], ["所が各国に設立され、再エネを優先しなくても導"], ["入拡大する方向で発展している。今後は、再エネ"], ["を従来の電源と競争しながら安価な電力供給を目"],
  ["指した取り組みが期待されている。", 16, "¶"], ["_ドイツの脱原発に舵を切った一方、フインラン"], ["ドは40年ぶりに欧州最大の新規原発を稼働し、原"], ["発回帰を実現した。ドイツは火力発電を増やさな"], ["いで自然エネに安定して依存できるのであろうか？"],
  ["_また、フインランドの新規原発は、電源が喪失"], ["しても1週間は安全で、メルトダウンしない欧州"], ["型加圧水型原発とあった。次回は、このように脱"], ["原発と原発回帰の流れの中で、当然ロシアのウク"], ["ライナ侵攻の伴う原発の位置づけが見直されてい"], ["るので紹介したい。", 9],
  ["", 0, "#"], [""],
];
const cells = Array.from({ length: 22 }, (_, i) => <i key={i} />);
function lineText(t: string) {
  if (t[0] === "_") return <><Blank>　</Blank>{t.slice(1)}</>;
  if (t[0] === "○") return <><Bullet>○</Bullet>{t.slice(1)}</>;
  return t;
}
function TextColumn({ lines = [] as L[] }) {
  return (
    <Col>
      {Array.from({ length: 40 }, (_, i) => {
        const l = lines[i];
        return (
          <Row key={i} $c={l ? c.grid : c.green}>
            {cells}
            {l && (
              <RowText $bold={l[0] === "おわりに"}>
                <Justified style={{ width: `${((l[1] ?? 22) / 22) * 100}%` }}>{lineText(l[0])}</Justified>
                {l[2] && <Mark>{l[2]}</Mark>}
              </RowText>
            )}
          </Row>
        );
      })}
    </Col>
  );
}
const Count = styled.div<{ $second?: boolean }>`
  position: absolute; top: ${(p) => (p.$second ? 552 : 534)}px; right: ${(p) => (p.$second ? 0 : 252)}px; color: ${c.grid}; font: 9px/14px ${ui};
`;
const Refs = styled.section`position: absolute; left: 0; right: 0; top: 558px; border-top: 1px solid ${c.grid}; font-size: 9px; white-space: nowrap;`;
const RefHead = styled.div`display: flex; align-items: center; height: 12px; font-weight: 700; &::after { content: ""; flex: 1; border-top: 1px solid #bbb; }`;
const RefList = styled.ul`
  height: 130px; display: flex; flex-direction: column; justify-content: space-between; padding-left: 2px;
  li { display: flex; line-height: 14px; }
`;
const refs: [string, number, boolean?][] = [
  ["1鍵谷司；自然エネルギーで脱原発はできるか（Ⅵ）_～主力電源化に向けて①；広域連系送電網が切り札か！～；", 481],
  ["　環境施設、169号、pp.50-58（2022.9）", 171, true],
  ["2）2022年の自然エネルギー電力の割合（暦年・速報）；特定非営利活動法人環境エネルギー政策研究所（Isep）", 475, true],
  ["3）統計・国際エネルギー；自然エネルギー財団", 208, true],
  ["4）自然ネルギー拡大に向けた系統運用_－日本と欧州の比較から－；自然エネルギー財団（2016.3）", 428, true],
  ["5）欧州の電力システム；中国電力㈱エネルギア総合研究所_エネルギア地域経済レポート、No.468（2013年7月）", 481],
  ["6）分山達也；自然エネルギーの導入拡大に向けた系統運用日本と欧州の比較から；自然エネルギー財団", 445, true],
  ["7）欧米における送電線利用ルールおよびその運用実態に関する調査（平成30年度－海外調査）最終報告書；電力", 481],
  ["　広域的運営推進機関（2019年３月）", 158, true],
];
const Folio = styled.footer`
  height: 27px; border: 1px dotted ${c.grid}; border-top: 0; display: flex; justify-content: space-between; align-items: flex-end; font-size: 11px; line-height: 10px; white-space: pre;
`;
const VScroll = styled.div`grid-row: 2 / 4; grid-column: 3; background: #4b4b4b; display: flex; flex-direction: column; align-items: center; justify-content: space-between; padding: 2px 0;`;
const HScroll = styled.div`flex: 1; align-self: stretch; background: #4b4b4b; display: flex; align-items: center; justify-content: space-between; margin-left: 2px; padding: 0 8px 0 2px;`;
const Thumb = styled.i<{ $w?: number; $h?: number; $below?: number }>`
  width: ${(p) => p.$w ?? 14}px; height: ${(p) => p.$h ?? 14}px; border-radius: 7px; background: #6a6a6a; margin-bottom: ${(p) => p.$below ?? 0}px;
`;
const Status = styled.footer`grid-column: 1 / -1; background: ${c.bar}; display: flex; align-items: center; padding-left: 14px; font-size: 12px;`;
const StatusCell = styled.span<{ $w: number }>`width: ${(p) => p.$w}px; flex: none; display: flex; align-items: center; justify-content: space-between; line-height: 16px;`;
const StatusBox = styled.span`width: 90px; height: 16px; border: 1px solid ${c.edge}; border-radius: 3px; background: ${c.field}; display: flex; overflow: hidden; input { flex: 1; width: 60px; padding-left: 4px; height: 14px; font-size: 12px; }`;
const Ok = styled.i`width: 10px; height: 10px; border-radius: 5px; background: #1b9a1b; margin: 0 6px 0 14px;`;
const Resize = styled.i`width: 10px; height: 10px; margin: 0 3px; background: radial-gradient(#888 1px, transparent 1px) 0 0 / 3px 3px; clip-path: polygon(100% 0, 100% 100%, 0 100%);`;

function Document() {
  return (
    <Doc>
      <DocTabs><DocTab>環境施設第172号.indd @ 75% <svg width="7" height="7" viewBox="0 0 7 7"><path d="M1 1l5 5M6 1L1 6" stroke="#fff" strokeWidth="1.800" /></svg></DocTab></DocTabs>
      <RulerCorner />
      <HRuler><HLead />{Array.from({ length: 17 }, (_, i) => <HSeg key={i}>{i * 72}</HSeg>)}</HRuler>
      <VScroll><Glyph n="chevU" size={12} color="#888" /><Thumb $h={25} $below={350} /><Glyph n="chevD" size={12} color="#888" /></VScroll>
      <VRuler>{Array.from({ length: 13 }, (_, i) => <VSeg key={i}><span>{i * 72}</span></VSeg>)}</VRuler>
      <Canvas>
        <Bleed>
          <Spread>
            <Sheet>
              <Frame>
                <TextColumn lines={left} /><TextColumn lines={right} />
                <Count>22W x 30L = 660(570)</Count>
                <Refs>
                  <RefHead>（引用・参考文献）</RefHead>
                  <RefList>{refs.map(([t, w, m]) => <li key={t}><Justified style={{ width: w }}>{t}</Justified>{m && <Mark>¶</Mark>}</li>)}</RefList>
                  <Mark>¶</Mark>
                </Refs>
                <Count $second>22W x 31L = 682(611)</Count>
              </Frame>
              <Folio><span>24</span><Mark>¦</Mark><span>環 境 施 設</span></Folio>
            </Sheet>
            <Sheet $right>
              <Frame><TextColumn /><TextColumn /></Frame>
              <Folio><span>No. 172 _ 2023. 6</span><Mark>¦</Mark><span>25</span></Folio>
            </Sheet>
          </Spread>
        </Bleed>
      </Canvas>
      <Status>
        <StatusCell $w={53}>75%<Glyph n="chevD" size={13} /></StatusCell>
        <StatusCell $w={42}><i /><Glyph n="first" size={13} /><Glyph n="prev" size={13} /></StatusCell>
        <i style={{ width: 7 }} />
        <StatusBox><input aria-label="ページ" defaultValue="24" /><Drop aria-label="ページ一覧"><Glyph n="chevD" size={13} /></Drop></StatusBox>
        <StatusCell $w={42}><i /><Glyph n="next" size={13} /><Glyph n="last" size={13} /></StatusCell>
        <StatusCell $w={49}><i /><Glyph n="pre" size={15} /><i /></StatusCell>
        <StatusCell $w={112}>[基本] (作業用)<Glyph n="chevD" size={13} /></StatusCell>
        <Ok />
        <StatusCell $w={113}>エラーなし<Glyph n="chevD" size={13} /></StatusCell>
        <HScroll><Glyph n="chevL" size={12} color="#888" /><Thumb $w={344} $h={15} /><Glyph n="chevR" size={12} color="#888" /></HScroll>
        <Glyph n="split" size={16} />
        <i style={{ width: 2 }} />
        <Resize />
      </Status>
    </Doc>
  );
}

/* ---------- panels ---------- */
const Panel = styled.section<{ $grow?: boolean }>`background: ${c.bar}; display: flex; flex-direction: column; ${(p) => (p.$grow ? "flex: 1; min-height: 0;" : "flex: none;")}`;
const Tabs = styled.div`height: 27px; flex: none; background: ${c.dark}; display: flex; align-items: stretch; border-bottom: 1px solid ${c.line};`;
const Tab = styled.button<{ $on?: boolean; $w: number }>`
  width: ${(p) => p.$w}px; border-right: 1px solid ${c.line}; color: ${(p) => (p.$on ? "#fff" : c.dim)}; gap: 4px; white-space: nowrap; font-size: 12px; font-feature-settings: "palt";
  ${(p) => p.$on && `background: ${c.bar}; height: 27px;`}
`;
const TabMenu = styled.button`margin-left: auto; width: 23px;`;
const Arrows = () => <svg width="5" height="9" viewBox="0 0 5 9"><path d="M.500 3.500l2-3 2 3M.500 5.500l2 3 2-3" fill="none" stroke="#bbb" /></svg>;
function TabRow({ items, on, mark = true }: { items: [string, number][]; on: number; mark?: boolean }) {
  return (
    <Tabs>
      {items.map(([t, w], i) => <Tab key={t} $w={w} $on={i === on}>{i === on && mark && <Arrows />}{t}</Tab>)}
      <TabMenu aria-label="パネルメニュー"><Glyph n="lines" size={13} /></TabMenu>
    </Tabs>
  );
}
const Foot = styled.div<{ $h: number; $pr: number }>`height: ${(p) => p.$h}px; flex: none; display: flex; align-items: center; gap: 14px; padding: 0 ${(p) => p.$pr}px 0 7px; border-top: 1px solid #484848;`;

/* icon dock */
const IconGroup = styled.div<{ $last?: boolean }>`background: ${c.bar}; display: flex; flex-direction: column; align-items: center; ${(p) => p.$last && "flex: 1;"}`;
const DockIcon = styled.button`height: 28px; width: 30px;`;
function IconDock() {
  return (
    <Dock $w={38}>
      <DockHead><Chevs back /></DockHead>
      {[["script", "dots"], ["snake", "import"], ["link2"], ["check", "over", "glass"], ["puzzle"]].map((g) => (
        <IconGroup key={g[0]}><Grip />{g.map((n) => <DockIcon key={n} aria-label={n}><Glyph n={n} size={18} /></DockIcon>)}</IconGroup>
      ))}
      <IconGroup $last />
    </Dock>
  );
}

/* pages */
const Masters = styled.ul`height: 130px; padding: 0 22px 0 4px; border-bottom: 2px solid #5f5f5f; li { height: 28px; margin-bottom: 1px; display: flex; align-items: center; justify-content: space-between; font-size: 12px; }`;
const MasterThumb = styled.span`display: flex; background: #fff; border: 1px solid #777; height: 24px;`;
const Leaf = styled.i`width: 16px; color: #000; font: 12px/16px ${ui}; text-align: center; & + & { border-left: 1px solid #777; width: 17px; }`;
const PageArea = styled.div`height: 197px; display: flex; overflow: hidden;`;
const PageList = styled.div`flex: 1; display: flex; flex-direction: column; align-items: center; padding-top: 6px;`;
const PageItem = styled.button`flex-direction: column; height: 64px; justify-content: flex-start;`;
const PageName = styled.span<{ $on?: boolean }>`font-size: 12px; line-height: 14px; padding: 0 4px; ${(p) => p.$on && "background: #2d8ceb; color: #fff;"}`;
const Track = styled.div`width: 13px; background: #4b4b4b; display: flex; flex-direction: column; align-items: center; justify-content: space-between; padding: 2px 0;`;
const ThumbArt = ({ k }: { k: number }) => {
  const on = k === 2;
  const ink = on ? "#4878ac" : "#808080";
  const bars: React.ReactNode[] = [];
  for (let q = 0; q < 4; q++) {
    if (on && q > 1) continue;
    for (let r = 0; r < 11; r++) {
      const y = 7 + r * 3;
      if ((q === 0 || q === 3) && r < 4) continue;
      if (k === 0 && q > 1 && r > 7) continue;
      if (k === 1 && q === 1 && r < 4) continue;
      bars.push(<rect key={q + "-" + r} x={1 + q * 12.5} y={y} width={(r * 5 + q) % 4 === 0 ? 8 : 12} height="2.400" fill={ink} />);
    }
  }
  return (
    <svg width="52" height="47" viewBox="0 0 52 47">
      <rect x=".500" y="6.500" width="51" height="35" fill={on ? "#9ac6f7" : "#fff"} stroke="#888" />
      {on && <path d="M1 7h11v12H1zM39 7h12v12H39z" fill="#fff" />}
      {bars}
      {k === 0 && <path d="M32 36h2v2h-2zM35 32h1v4h-1zM40 36h2v1h-2zM45 34h1v2h-1zM36 38h3v1h-3z" fill="#222" />}
      {k === 1 && <path d="M14 10h2v2h-2zM19 11h1v3h-1zM16 15h2v1h-2zM21 16h1v2h-1z" fill="#222" />}
      <path d="M26.500 0v47" stroke="#bbb" />
      <text x="2" y="18" fontSize="12" fill="#000" fontFamily="Noto Sans">A</text>
      <text x="40" y="18" fontSize="12" fill="#000" fontFamily="Noto Sans">A</text>
    </svg>
  );
};
function PagesPanel() {
  return (
    <Panel>
      <TabRow items={[["ページ", 59], ["レイヤー", 61], ["リンク", 47]]} on={0} />
      <Masters>
        {["[なし]", "A-マスター", "B-多事雑言", "C-数式"].map((t, i) => (
          <li key={t}>{t}<MasterThumb><Leaf>{i > 1 && "A"}</Leaf>{i > 0 && <Leaf>{i > 1 && "A"}</Leaf>}</MasterThumb></li>
        ))}
      </Masters>
      <PageArea>
        <PageList>
          {["20-21", "22-23", "24-25"].map((t, k) => <PageItem key={t}><ThumbArt k={k} /><PageName $on={k === 2}>{t}</PageName></PageItem>)}
        </PageList>
        <Track><Glyph n="chevU" size={12} color="#999" /><Thumb $w={11} $h={25} $below={68} /><Glyph n="chevD" size={12} color="#999" /></Track>
      </PageArea>
      <Foot $h={25} $pr={24}><span style={{ flex: 1 }}>42 スプレッド内の 82 ページ</span><Glyph n="pages" size={17} /><Glyph n="plus" size={14} /><Glyph n="trash" size={14} /></Foot>
    </Panel>
  );
}

/* swatches */
const SwatchHead = styled.div`height: 40px; display: flex; align-items: center; padding: 0 31px 0 7px; gap: 3px; font-size: 12px;`;
const SwatchList = styled.ul`height: 243px; border: 1px solid #616161; margin: 0 1px;`;
const SwatchRow = styled.li<{ $on?: boolean }>`
  height: 22px; display: flex; align-items: center; gap: 2px; border-bottom: 1px solid #616161; padding: 0 14px 0 17px; font-size: 12px; ${(p) => p.$on && `background: ${c.pick};`}
  & > span { flex: 1; padding-left: 5px; }
`;
const Color = styled.i<{ $c: string }>`width: 14px; height: 14px; border: 1px solid #222; background: ${(p) => p.$c}; flex: none;`;
const none = "linear-gradient(to top left, #fff 44%, red 44% 56%, #fff 56%)";
const Kind = ({ k }: { k: string }) =>
  k === "cmyk" ? (
    <svg width="14" height="13" viewBox="0 0 14 13"><path fill="#ddd" d="M0 0h14v13H0z" /><path fill="#0ff" d="M1 1v11l6-5.500z" /><path fill="#f0f" d="M1 1h12L7 6.500z" /><path fill="#ff0" d="M13 1v11L7 6.500z" /><path fill="#000" d="M1 12h12L7 6.500z" /></svg>
  ) : k === "tint" ? (
    <svg width="14" height="13" viewBox="0 0 14 13"><path fill="#c8c8c8" d="M1 1h11v11H1z" /><path stroke="#6a6a6a" strokeDasharray="1 1" d="M2 2.500h9M3 3.500h8M2 4.500h9M3 5.500h8M2 6.500h9M3 7.500h8M2 8.500h9M3 9.500h8M2 10.500h9" /></svg>
  ) : k === "none" ? <Color $c={none} /> : k === "" ? <i style={{ width: 14 }} /> : <Glyph n={k} size={14} />;
const swatches: [string, string, string[]][] = [
  ["[なし]", none, ["nopen", "", "none"]], ["[レジストレーション]", "#000", ["nopen", "", "target"]], ["[紙色]", "#fff", []], ["[黒]", "#000", ["nopen", "tint", "cmyk"]],
  ["シアン", "#00a0e9", ["tint", "cmyk"]], ["マゼンダ", c.magenta, ["tint", "cmyk"]], ["[黒] 10%", "#efefef", ["tint", "cmyk"]], ["C=0 M=100 Y=0 K=0", c.magenta, ["tint", "cmyk"]], ["c0m0y0k20", "#dcdddd", ["tint", "cmyk"]],
];
function SwatchPanel() {
  return (
    <Panel>
      <TabRow items={[["スウォッチ", 72], ["グラデーション", 86]]} on={0} />
      <SwatchHead>
        <SwatchPile />
        <i style={{ width: 3 }} /><Target $on aria-label="オブジェクト"><Square /></Target><Target $w={14} aria-label="テキスト">T</Target>
        <Fill /><span>濃淡 :</span><Field label="濃淡" value="100" side w={53} /><span>%</span>
      </SwatchHead>
      <SwatchList>
        {swatches.map(([t, col, k]) => <SwatchRow key={t} $on={t === "[黒]"}><Color $c={col} /><span>{t}</span>{k.map((x, i) => <Kind key={i} k={x} />)}</SwatchRow>)}
      </SwatchList>
      <Foot $h={26} $pr={24}><Glyph n="lib" size={14} /><Fill /><Glyph n="tiles" size={14} /><Glyph n="folder" size={14} /><Glyph n="plus" size={14} /><Glyph n="trash" size={14} color="#888" /></Foot>
    </Panel>
  );
}

/* table + paragraph rows */
const Rows = styled.div<{ $pad: string }>`padding: ${(p) => p.$pad};`;
const FormRow = styled.div<{ $cols: string; $h?: number }>`display: grid; grid-template-columns: ${(p) => p.$cols}; align-items: center; height: ${(p) => p.$h ?? 26}px; font-size: 12px;`;
const Hair = styled.i`display: block; height: 1px; background: #464646; margin: 2px 0 3px;`;
function TablePanel() {
  return (
    <Panel $grow>
      <TabRow items={[["表", 47], ["表スタイル", 71], ["セルスタイル", 80]]} on={0} mark={false} />
      <Rows $pad="4px 46px 0 5px">
        <FormRow $cols="21px 88px 13px 20px 88px"><Glyph n="cells" /><Field label="行数" ghost spin /><i /><Glyph n="cols" /><Field label="列数" ghost spin /></FormRow>
        <Hair />
        <FormRow $cols="21px 88px 12px 109px"><Glyph n="rowH" /><Pick label="行の高さ" value="指定値..." ghost /><i /><Field label="高さ" ghost spin /></FormRow>
        <FormRow $cols="21px 88px"><Glyph n="colW" /><Field label="列の幅" ghost spin /></FormRow>
        <Hair />
        <FormRow $cols="8px 62px 53px 14px 24px 24px 24px 21px"><i /><span>組み方向：</span><Pick label="組み方向" value="横" ghost /><i /><Glyph n="mini" color="#909090" /><Glyph n="mini" color="#909090" /><Glyph n="mini" color="#909090" /><Glyph n="mini2" color="#909090" /></FormRow>
        <i style={{ display: "block", height: 2 }} />
        <Line $gap={9}>
          <div>
            <FormRow $cols="21px 77px"><Glyph n="insT" /><Field label="上" ghost spin /></FormRow>
            <FormRow $cols="21px 77px"><Glyph n="insB" /><Field label="下" ghost spin /></FormRow>
          </div>
          <Glyph n="unlink" size={17} color="#8a8a8a" />
          <div>
            <FormRow $cols="21px 77px"><Glyph n="insL" /><Field label="左" ghost spin /></FormRow>
            <FormRow $cols="21px 77px"><Glyph n="insR" /><Field label="右" ghost spin /></FormRow>
          </div>
        </Line>
      </Rows>
    </Panel>
  );
}

/* color */
const ColorBody = styled.div`height: 140px; padding: 6px 35px 7px 7px; display: flex; flex-direction: column; justify-content: space-between;`;
const ColorTop = styled.div`display: grid; grid-template-columns: 47px minmax(0, 1fr); font-size: 13px;`;
const Indent = styled.div<{ $p: number }>`padding-left: ${(p) => p.$p}px; line-height: 24px;`;
const Tint = styled.input`
  appearance: none; flex: 1; width: 60px; height: 20px;
  &::-webkit-slider-runnable-track { height: 5px; background: linear-gradient(90deg, #fff, #000); }
  &::-webkit-slider-thumb { appearance: none; width: 10px; height: 11px; margin: 4px -5px 0 0; background: #ccc; clip-path: polygon(50% 0, 100% 50%, 100% 100%, 0 100%, 0 50%); }
`;
const Spectrum = styled.div`height: 16px; border: 1px solid #222; display: flex; background: linear-gradient(90deg, #fff 17px, #8a8a8a 60%, #000 210px);`;
const NoColor = styled.i`width: 17px; border-right: 1px solid #222; background: ${none};`;
const BW = styled.i`width: 15px; margin-left: auto; background: linear-gradient(#fff 50%, #000 50%);`;
function ColorPanel() {
  return (
    <Panel>
      <TabRow items={[["カラー", 57], ["線", 46], ["効果", 47]]} on={0} />
      <ColorBody>
        <ColorTop>
          <div><Indent $p={4}><SwatchPile /></Indent><Line $gap={2} style={{ marginTop: 6 }}><Target $on aria-label="オブジェクト"><Square /></Target><Target aria-label="テキスト">T</Target></Line></div>
          <div>
            <Line $gap={2}><label htmlFor="tint" style={{ width: 16 }}>T</label><Tint id="tint" type="range" defaultValue={100} /><i style={{ width: 5 }} /><Field label="濃度" value="100" w={36} /><span>%</span></Line>
            <Indent $p={16} style={{ paddingTop: 3 }}>[黒]<br />C=0, M=0, Y=0, K=100</Indent>
          </div>
        </ColorTop>
        <Spectrum><NoColor /><BW /></Spectrum>
      </ColorBody>
    </Panel>
  );
}

/* paragraph */
const AlignRow = styled.div`height: 32px; display: flex; align-items: center; gap: 2px; & > :nth-child(4) { margin-left: 8px; } & > :nth-child(8) { margin-left: 9px; }`;
const CheckLabel = styled.label`display: flex; align-items: center; gap: 7px; input { appearance: none; width: 13px; height: 13px; border: 1px solid #aaa; border-radius: 2px; }`;
const cols5 = "22px 87px 12px 22px 87px";
function ParagraphPanel() {
  return (
    <Panel>
      <TabRow items={[["段落", 54], ["段落スタイル", 84]]} on={0} />
      <Rows $pad="1px 34px 4px 5px">
        <AlignRow>{Array.from({ length: 9 }, (_, k) => <Press key={k} $on={k === 3} aria-label={"行揃え " + (k + 1)}><Glyph d={alignIcon(k)} color="#ccc" /></Press>)}</AlignRow>
        <Hair />
        <FormRow $cols={cols5}><Glyph n="indL" /><Field label="左インデント" value="0 pt" spin /><i /><Glyph n="indR" /><Field label="右インデント" value="0 pt" spin /></FormRow>
        <FormRow $cols={cols5}><Glyph n="indF" /><Field label="1行目左" value="0 pt" spin /><i /><Glyph n="indE" /><Field label="最終行右" value="0 pt" spin /></FormRow>
        <FormRow $cols="22px 68px 1fr"><Glyph n="rows" /><Pick label="行取り" value="自動" /><span style={{ paddingLeft: 4 }}>行</span></FormRow>
        <Hair />
        <FormRow $cols={cols5}><Glyph n="before" /><Field label="段落前" value="0 pt" spin /><i /><Glyph n="after" /><Field label="段落後" value="0 pt" spin /></FormRow>
        <FormRow $cols="22px 17px 70px"><Glyph n="mid" /><Spin $ghost aria-label="段落間"><Glyph n="chevU" size={10} /><Glyph n="chevD" size={10} /></Spin><Pick label="段落間" value="無視" /></FormRow>
        <Hair />
        <FormRow $cols={cols5}><Glyph n="drop" /><Field label="ドロップキャップ行数" value="0" spin /><i /><Glyph n="dropN" /><Field label="ドロップキャップ文字数" value="0" spin /></FormRow>
        <Hair />
        <i style={{ display: "block", height: 2 }} />
        {[["背景色", "shade"], ["囲み罫", "pilcrow"]].map(([t, n]) => (
          <FormRow key={t} $cols="122px 19px 89px" $h={33}>
            <CheckLabel><input type="checkbox" />{t}</CheckLabel><Glyph n={n} />
            <Box><Paper><Color $c="#000" />[黒]</Paper><Drop aria-label={t}><Glyph n="chevD" size={13} /></Drop></Box>
          </FormRow>
        ))}
        <i style={{ display: "block", height: 3 }} />
        <Hair />
        <FormRow $cols="62px 168px"><span>禁則処理：</span><Pick label="禁則処理" value="強い禁則" line={false} /></FormRow>
        <FormRow $cols="62px 168px"><span>文字組み：</span><Pick label="文字組み" value="富士リプロ基本文字組み" line={false} /></FormRow>
      </Rows>
    </Panel>
  );
}

/* character styles */
const StyleHead = styled.div`height: 25px; flex: none; display: flex; align-items: center; justify-content: space-between; padding: 0 8px 0 5px; gap: 14px; border-bottom: 1px solid #616161; & > span { flex: 1; }`;
const StyleArea = styled.div`display: flex; border-bottom: 1px solid #484848;`;
const StyleList = styled.ul`flex: 1; padding-left: 1px;`;
const StyleRow = styled.li<{ $on?: boolean; $folder?: boolean }>`
  height: 22px; border-bottom: 1px solid #616161; display: flex; align-items: center; gap: 3px; padding: 0 10px 0 ${(p) => (p.$folder ? 2 : 35)}px; white-space: pre; ${(p) => p.$on && `background: ${c.pick};`}
  & > span { flex: 1; }
`;
const charStyles = ["[なし]", "網かけ", "イタリック", "A-OTF 中ゴシックBBB Pro", "A-OTF リュウミン Pr5 R-KL", "A-OTF 太ゴB101 Pro", "A-OTF リュウミン Pr5 B-KL", "A-OTF 中ゴPro イタリック", "Arial Italic", "目次　ノンブル", "プロポーショナル字形", "正規表現スタイル", "Times New Roman"];
function StylePanel() {
  return (
    <Panel $grow>
      <TabRow items={[["文字", 48], ["文字スタイル", 91]]} on={1} />
      <StyleHead><span>A-OTF 中ゴシックBBB Pro</span><Glyph n="aplus" size={17} /><Glyph n="bolt" size={13} /></StyleHead>
      <StyleArea>
        <StyleList>
          {charStyles.map((t, i) => (
            <StyleRow key={t} $on={i === 3} $folder={i === 11}>
              {i === 11 && <><Glyph n="chevR" size={12} /><Glyph n="folder" size={15} /></>}
              <span>{t}</span>{i === 0 && <Glyph n="nopen" size={14} />}
            </StyleRow>
          ))}
        </StyleList>
        <Track><Glyph n="chevU" size={12} color="#999" /><Thumb $w={10} $h={84} $below={178} /><Glyph n="chevD" size={12} color="#999" /></Track>
      </StyleArea>
      <Foot $h={24} $pr={24}><Glyph n="lib" size={14} /><Fill /><Glyph n="folder" size={14} /><Glyph n="plus" size={14} /><Glyph n="trash" size={14} /></Foot>
      <Foot $h={17} $pr={0} />
    </Panel>
  );
}

const menus: [string, string][] = [["ファイル", "F"], ["編集", "E"], ["レイアウト", "L"], ["書式", "T"], ["オブジェクト", "O"], ["表", "A"], ["表示", "V"], ["ウィンドウ", "W"], ["ヘルプ", "H"]];

export default function App() {
  return (
    <Shell>
      <Global />
      <Upper>
        <AppWindow>
          <MenuBar>
            <Logo>Id</Logo>
            <Glyph n="home" size={18} color="#ccc" />
            <MenuNav>{menus.map(([t, k]) => <button key={k}>{t}(<u>{k}</u>)</button>)}</MenuNav>
            <Share>共有</Share>
            <BarRule />
            <Account>富士リプロ<Glyph n="chevD" size={14} color="#eee" /></Account>
            <BarRule style={{ marginLeft: 7 }} />
            <Search><Glyph n="search" size={16} color="#2d8ceb" /><input aria-label="Adobe Stock" placeholder="Adobe Stock" /></Search>
            <WinKeys>
              <button aria-label="最小化"><svg width="10" height="10"><path d="M0 8h10" stroke="#c4c4c4" strokeWidth="3" /></svg></button>
              <button aria-label="元に戻す"><svg width="12" height="10"><path d="M1 4h6v5H1zM5 3V1h6v5H8" fill="none" stroke="#c4c4c4" strokeWidth="1.500" /></svg></button>
              <button aria-label="閉じる"><svg width="10" height="9"><path d="M1 0l8 9M9 0L1 9" stroke="#c4c4c4" strokeWidth="2" /></svg></button>
            </WinKeys>
          </MenuBar>
          <ControlBar />
          <Work>
            <ToolBox />
            <Document />
            <IconDock />
            <Dock $w={281}><DockHead><Chevs /></DockHead><PagesPanel /><SwatchPanel /><TablePanel /></Dock>
            <Dock $w={269}><DockHead><Chevs /></DockHead><ColorPanel /><ParagraphPanel /><StylePanel /></Dock>
          </Work>
        </AppWindow>
        <Behind />
      </Upper>
      <Taskbar><TaskTab /></Taskbar>
    </Shell>
  );
}
